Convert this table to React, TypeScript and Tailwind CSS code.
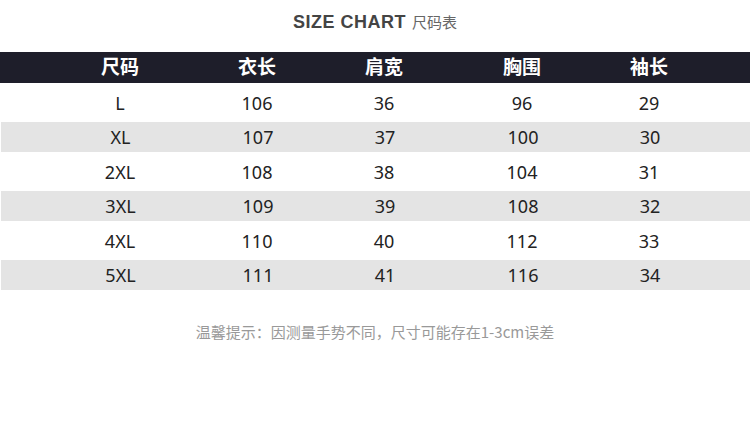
const headers = ["尺码", "衣长", "肩宽", "胸围", "袖长"];

const rows = [
  ["L", "106", "36", "96", "29"],
  ["XL", "107", "37", "100", "30"],
  ["2XL", "108", "38", "104", "31"],
  ["3XL", "109", "39", "108", "32"],
  ["4XL", "110", "40", "112", "33"],
  ["5XL", "111", "41", "116", "34"],
];

const cols = "grid grid-cols-[136px_138px_116px_160px_94px] pl-[52px]";

export default function App() {
  return (
    <div
      className="w-[750px] h-[437px] bg-white overflow-hidden"
      style={{ fontFamily: '"Noto Sans", "Noto Sans CJK SC", sans-serif' }}
    >
      {/* title */}
      <div className="h-[52px] flex items-start justify-center pt-[9px]">
        <span className="text-[18px] font-bold text-[#444] tracking-[0.5px] font-['Liberation_Sans',sans-serif] leading-[26px]">
          SIZE CHART
        </span>
        <span className="ml-[6px] text-[15px] text-[#666] leading-[26px] font-['Noto_Sans_CJK_SC',sans-serif]">
          尺码表
        </span>
      </div>

      {/* table */}
      <div className={`${cols} h-[31px] bg-[#1e1e2a] items-center`}>
        {headers.map((h) => (
          <div key={h} className="text-center text-white font-bold text-[19px] leading-none">
            {h}
          </div>
        ))}
      </div>
      {rows.map((r, i) => (
        <div
          key={r[0]}
          className={`${cols} items-center ${i % 2 === 1 ? "h-[30px] bg-[#e4e4e4] ml-px" : "h-[39px]"}`}
        >
          {r.map((v, j) => (
            <div key={j} className={`text-center text-[18px] text-[#222] leading-none ${i % 2 === 1 && j === 0 ? "-ml-px" : ""}`}>
              {v}
            </div>
          ))}
        </div>
      ))}

      {/* note */}
      <div className="mt-[32px] text-center text-[15px] text-[#999] leading-[20px] font-['Noto_Sans_CJK_SC',sans-serif]">
        温馨提示：因测量手势不同，尺寸可能存在1-3cm误差
      </div>
    </div>
  );
}
